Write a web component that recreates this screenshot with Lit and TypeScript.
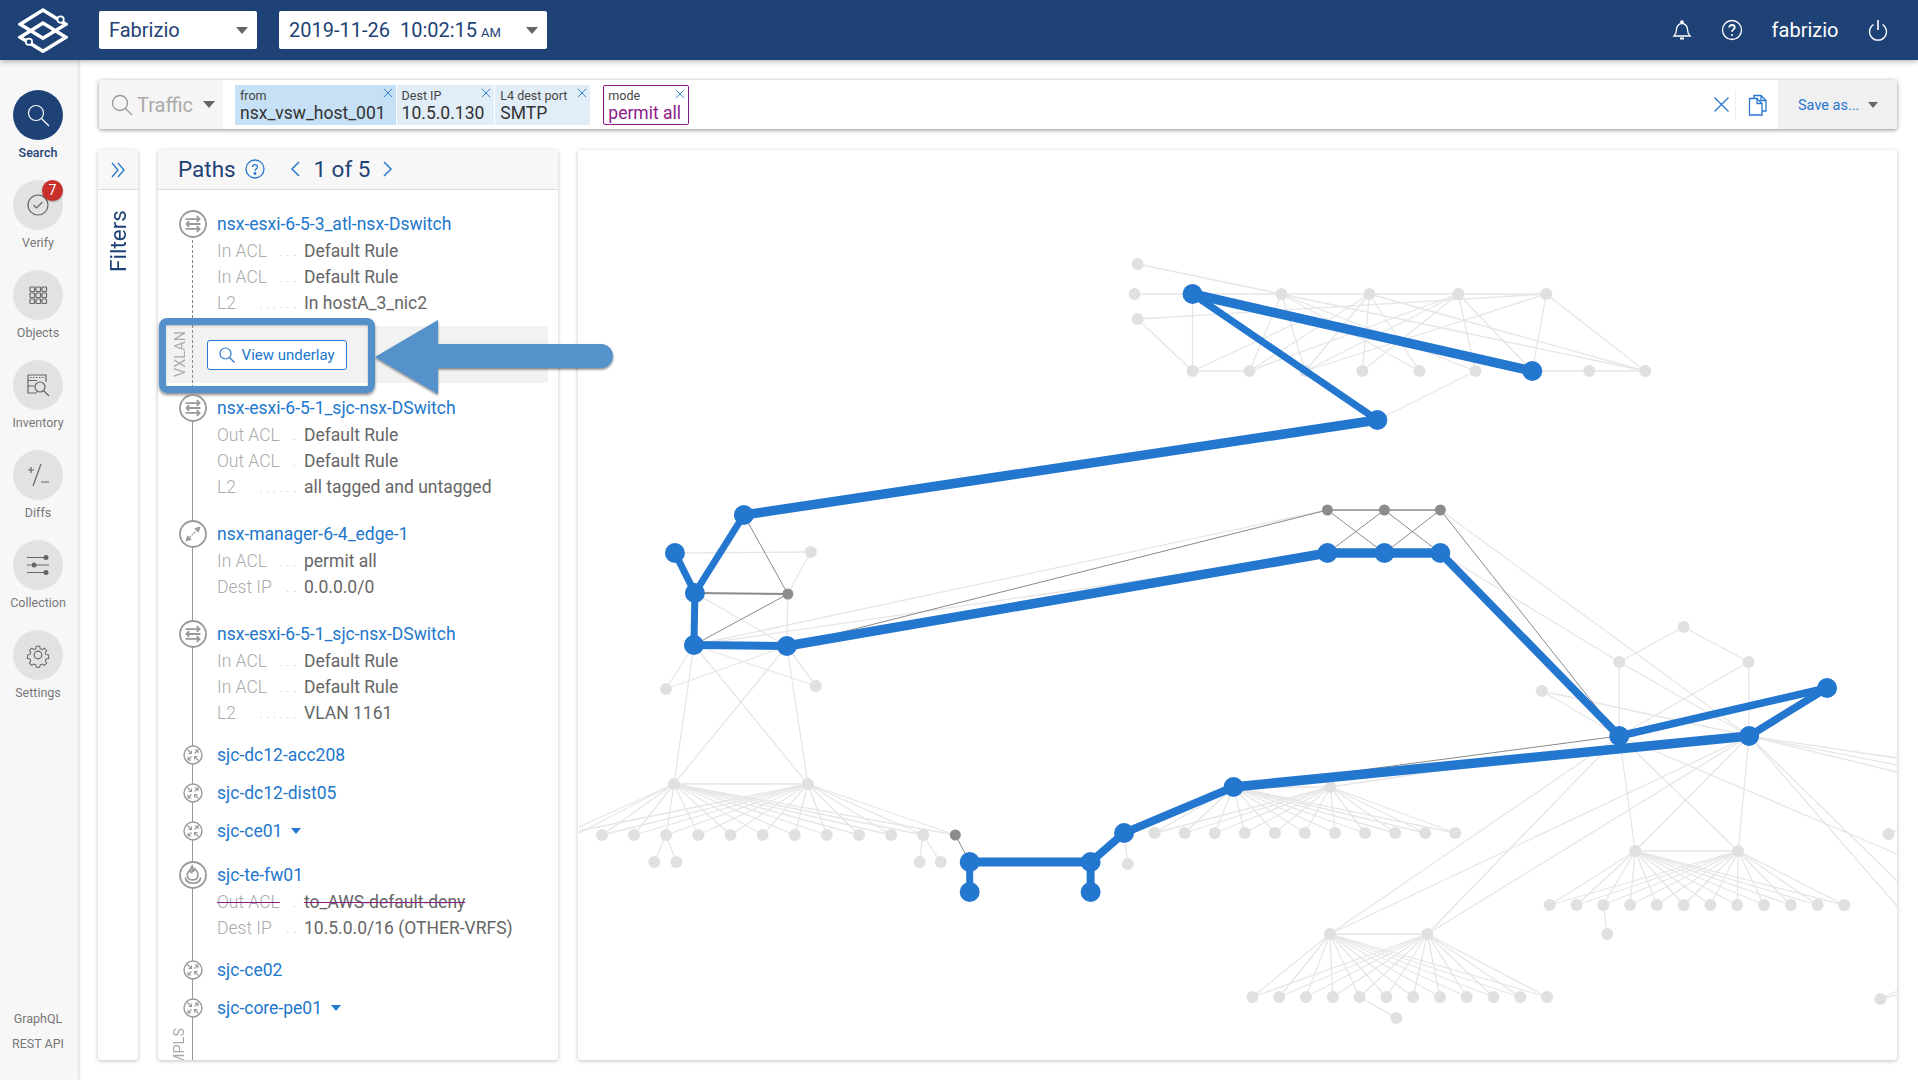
import { LitElement, html, svg, css } from 'lit';
import { customElement } from 'lit/decorators.js';

type Pt = [number, number];

const row = (xs: number[], y: number): Pt[] => xs.map((x) => [x, y] as Pt);
const range = (start: number, step: number, n: number) => Array.from({ length: n }, (_, i) => start + i * step);

const topRow = row([1281, 1369, 1458, 1546], 293);
const botRow = row([1192, 1249, 1305, 1362, 1419, 1475, 1532, 1589, 1645], 370);
const leftParents: Pt[] = [[673, 783], [807, 783]];
const leftFan = row(range(601, 32.15, 11), 834);
const midParents: Pt[] = [[1233, 786], [1330, 786]];
const midFan = row(range(1154, 30.1, 11), 832);
const rightParents: Pt[] = [[1635, 850], [1738, 850]];
const rightFan = row(range(1549.5, 26.8, 12), 904);
const lowParents: Pt[] = [[1329.5, 933], [1427, 933]];
const lowFan = row(range(1252, 26.8, 12), 996);

const L: Pt = [1619, 735];
const M: Pt = [1749, 735];

const fan = (ps: Pt[], cs: Pt[]): [Pt, Pt][] => ps.flatMap((p) => cs.map((c) => [p, c] as [Pt, Pt]));

const lightEdges: [Pt, Pt][] = [
  ...fan(leftParents, leftFan),
  ...fan(leftParents, [[954.6, 834]]),
  ...fan(midParents, midFan),
  ...fan(rightParents, rightFan),
  ...fan(lowParents, lowFan),
  ...fan([L, M], rightParents),
  ...fan([L, M], lowParents),
  ...fan([[693, 644], [786, 645]], leftParents),
  ...fan([[693, 644], [786, 645]], [[665, 688], [815, 685]]),
  ...fan([[1281, 293]], row([1249, 1305, 1419, 1475, 1645], 370)),
  ...fan([[1369, 293]], row([1249, 1305, 1362, 1419, 1645], 370)),
  ...fan([[1458, 293]], row([1249, 1305, 1362, 1475, 1532], 370)),
  ...fan([[1546, 293]], row([1305, 1532, 1645], 370)),
  [[1137, 263], [1281, 293]],
  [[1134, 293], [1546, 293]],
  [[1137, 318], [1546, 293]],
  [[1137, 318], [1192, 370]],
  [[1192, 293], [1192, 370]],
  [[1192, 370], [1305, 318]],
  [[1192, 370], [1249, 370]],
  [[1532, 370], [1645, 370]],
  [[1377, 419], [1475, 370]],
  [[674, 552], [810, 551]],
  [[810, 551], [787, 593]],
  [[787, 593], [786, 645]],
  [[694, 592], [786, 645]],
  [[693, 644], [1327, 509]],
  [[693, 644], [1327, 552]],
  [[1440, 552], [1619, 661]],
  [[1440, 509], M],
  [[1683.5, 626], [1619, 661]],
  [[1683.5, 626], [1748.5, 661]],
  [[1619, 661], L],
  [[1748.5, 661], M],
  [[1748.5, 661], L],
  [[1619, 661], M],
  [[1541.5, 690], L],
  [[1541.5, 690], M],
  [M, [1897, 757]],
  [M, [1897, 764]],
  [M, [1897, 771]],
  [L, [1897, 853]],
  [M, [1897, 905]],
  [M, [1897, 880]],
  [[1605, 745], [1330, 786]],
  [[665, 834], [653.5, 861]],
  [[665, 834], [675.5, 861]],
  [[922, 834], [919, 861]],
  [[922, 834], [940, 861]],
  [[1603, 904], [1607, 933]],
  [[1359, 996], [1396, 1017]],
  [[1124, 832], [1127, 863]],
  [[673, 783], [578, 826]],
  [[673, 783], [578, 832]],
  [[807, 783], [578, 830]],
  [[673, 783], [807, 783]],
  [[1233, 786], [1330, 786]],
  [[1635, 850], [1738, 850]],
  [[1329.5, 933], [1427, 933]],
  [[1888.5, 833], [1897, 829]],
  [[1880.5, 998], [1897, 990]],
  [[1880.5, 998], [1897, 994]],
];

const lightNodes: Pt[] = [
  [1137, 263], [1134, 293], [1137, 318],
  ...topRow, ...botRow,
  [810, 551], [665, 688], [815, 685],
  ...leftParents, ...leftFan,
  [653.5, 861], [675.5, 861], [919, 861], [940, 861],
  ...midParents, ...midFan, [1127, 863],
  ...rightParents, ...rightFan, [1607, 933],
  ...lowParents, ...lowFan, [1396, 1017],
  [1683.5, 626], [1619, 661], [1748.5, 661], [1541.5, 690],
  [1888.5, 833], [1880.5, 998],
];

const darkEdges: [Pt, Pt, number][] = [
  [[743, 514], [787, 593], 1],
  [[694, 592], [787, 593], 2],
  [[693, 644], [787, 593], 1],
  [[786, 645], [1327, 509], 1],
  [[1327, 509], [1440, 509], 1.6],
  [[1327, 509], [1384, 552], 1],
  [[1384, 509], [1327, 552], 1],
  [[1384, 509], [1440, 552], 1],
  [[1440, 509], [1384, 552], 1],
  [[1440, 509], L, 1],
  [L, [1233, 786], 1],
  [[954.6, 834], [969, 861], 1],
];

const darkNodes: Pt[] = [[787, 593], [1327, 509], [1384, 509], [1440, 509], [954.6, 834]];

const blueEdges: [Pt, Pt, number][] = [
  [[1192, 293], [1532, 370], 9.5],
  [[1192, 293], [1377, 419], 7],
  [[1377, 419], [743, 514], 9.5],
  [[743, 514], [694, 592], 7],
  [[674, 552], [694, 592], 7],
  [[694, 592], [693, 644], 7],
  [[693, 644], [786, 645], 8],
  [[786, 645], [1327, 552], 9.5],
  [[1327, 552], [1440, 552], 9.5],
  [[1440, 552], L, 8],
  [L, [1827, 687], 7.5],
  [M, [1827, 687], 7.5],
  [M, [1233, 786], 9.5],
  [[1233, 786], [1123.5, 832], 8],
  [[1123.5, 832], [1090, 861], 8],
  [[1090, 861], [969, 861], 9],
  [[969, 861], [969, 891], 7],
  [[1090, 861], [1090, 891], 8],
];

const blueNodes: Pt[] = [
  [1192, 293], [1532, 370], [1377, 419], [743, 514], [674, 552], [694, 592], [693, 644], [786, 645],
  [1327, 552], [1384, 552], [1440, 552], L, M, [1827, 687], [1233, 786], [1123.5, 832],
  [1090, 861], [969, 861], [969, 891], [1090, 891],
];

const esxiIcon = html`<svg class="ic big" viewBox="0 0 34 34">
  <circle cx="17" cy="17" r="15.8" fill="#fff" stroke="#999" stroke-width="2.200"/>
  <g fill="none" stroke="#999" stroke-width="2.200">
    <path d="M8 11h17M21.500 7.500l3.500 3.500-3.500 3.500"/><path d="M26 17H9M12.500 13.500L9 17l3.500 3.500"/><path d="M8 23h17M21.500 19.500l3.500 3.500-3.500 3.500"/>
  </g>
</svg>`;

const edgeIcon = html`<svg class="ic big" viewBox="0 0 34 34">
  <circle cx="17" cy="17" r="15.8" fill="#fff" stroke="#999" stroke-width="2.200"/>
  <path d="M13 21L21 13" fill="none" stroke="#999" stroke-width="1.800" stroke-dasharray="2 1.500"/>
  <path d="M26 8l-2 7.500L18.500 10zM8 26l2-7.500 5.500 5.500z" fill="#999"/>
</svg>`;

const routerIcon = html`<svg class="ic small" viewBox="0 0 20 20">
  <circle cx="10" cy="10" r="9" fill="#fff" stroke="#999" stroke-width="1.400"/>
  <path d="M4.500 4.500L8.500 8.500M8.500 5.500v3h-3M11.500 8.500L15 5M11.800 5H15v3.200M8.500 11.500L5 15M5 11.800V15h3.200M15.500 15.500L11.500 11.500M11.500 14.500v-3h3" fill="none" stroke="#999" stroke-width="1.100"/>
</svg>`;

const fireIcon = html`<svg class="ic big" viewBox="0 0 34 34">
  <circle cx="17" cy="17" r="15.8" fill="#fff" stroke="#999" stroke-width="2.200"/>
  <path d="M16 6c1 3 1 5 .5 7 1.500-.5 2.500-2 2.500-3.500 3 2.500 4.500 5.500 4 8.500-.4 2.800-3 5-6.500 5s-6-2-6.500-5c-.5-3 1-5 2.500-6.500.5 1 1 1.800 2 2.300C13.500 11.500 14.500 8.500 16 6z" fill="none" stroke="#999" stroke-width="2"/>
  <path d="M7.500 20c1 4.500 5 7 9.500 7s8.500-2.500 9.500-7" fill="none" stroke="#999" stroke-width="2"/>
</svg>`;

type Detail = { label: string; dots: string; value: string; strike?: boolean };

const d = (label: string, dots: string, value: string, strike = false): Detail => ({ label, dots, value, strike });

const closeX = html`<svg class="chip-x" viewBox="0 0 12 12"><path d="M1 1l10 10M11 1L1 11" stroke="#2878d0" stroke-width="1.100" fill="none"/></svg>`;

const caret = html`<span class="caret"></span>`;

@customElement('app-root')
export class AppRoot extends LitElement {
  static styles = css`
    :host {
      display: block;
      min-height: 100vh;
      font-family: Roboto, 'Liberation Sans', sans-serif;
      color: #666;
      background: #fff;
    }

    .page {
      display: flex;
      flex-direction: column;
      height: 1080px;
      overflow: hidden;
    }

    .top {
      height: 60px;
      flex: none;
      display: flex;
      align-items: center;
      background: #1e4276;
      box-shadow: 0 1px 6px rgba(0, 0, 0, 0.35);
      position: relative;
      z-index: 3;
      padding: 0 29.500px 0 18px;
      color: #fff;
    }

    .logo {
      width: 50px;
      height: 45px;
      margin-right: 31px;
    }

    .select {
      height: 38px;
      background: #fff;
      border-radius: 2px;
      display: flex;
      align-items: center;
      color: #1e4276;
      font-size: 20px;
      padding: 0 9px 0 10px;
      box-sizing: border-box;
      justify-content: space-between;
    }

    .select.org {
      width: 158px;
      margin-right: 22px;
    }

    .select.date {
      width: 268px;
    }

    .select small {
      font-size: 13px;
      margin-left: 4px;
    }

    .caret {
      width: 0;
      height: 0;
      border-left: 6px solid transparent;
      border-right: 6px solid transparent;
      border-top: 7px solid #666;
      display: inline-block;
    }

    .top-right {
      margin-left: auto;
      display: flex;
      align-items: center;
      font-size: 20px;
    }

    .top-right svg {
      width: 22px;
      height: 22px;
      fill: none;
      stroke: #fff;
      stroke-width: 1.300;
    }

    .top-right .help {
      margin: 0 29px 0 28px;
    }

    .top-right .user {
      margin-right: 28px;
    }

    .body {
      flex: 1;
      display: flex;
      min-height: 0;
    }

    .side {
      width: 78px;
      flex: none;
      background: #f7f7f7;
      box-shadow: 1px 0 3px rgba(0, 0, 0, 0.18);
      display: flex;
      flex-direction: column;
      align-items: center;
      padding: 30px 2px 24px 0;
      box-sizing: border-box;
      font-size: 12.500px;
      color: #777;
    }

    .nav {
      width: 76px;
      height: 90px;
      display: flex;
      flex-direction: column;
      align-items: center;
      position: relative;
    }

    .nav .circle {
      width: 50px;
      height: 50px;
      border-radius: 50%;
      background: #e2e2e2;
      display: flex;
      align-items: center;
      justify-content: center;
    }

    .nav .circle svg {
      width: 26px;
      height: 26px;
      fill: none;
      stroke: #666;
      stroke-width: 1.200;
    }

    .nav span {
      margin-top: 5px;
      line-height: 16px;
    }

    .nav.on .circle {
      background: #1e4276;
    }

    .nav.on .circle svg {
      stroke: #fff;
    }

    .nav.on span {
      color: #1e4276;
      font-weight: 500;
    }

    .badge {
      position: absolute;
      top: 0;
      left: 42px;
      width: 21px;
      height: 21px;
      border-radius: 50%;
      background: #c9302c;
      color: #fff;
      font-size: 14px;
      line-height: 21px;
      text-align: center;
      box-shadow: 0 1px 2px rgba(0, 0, 0, 0.3);
    }

    .api {
      margin-top: auto;
      line-height: 25px;
      text-align: center;
    }

    .main {
      flex: 1;
      min-width: 0;
      display: flex;
      flex-direction: column;
      padding: 20px 21px 20px 20px;
      gap: 21px;
    }

    .search {
      height: 49px;
      flex: none;
      margin-left: 1px;
      display: flex;
      align-items: stretch;
      background: #fff;
      border-radius: 3px;
      box-shadow: 0 1px 4px rgba(0, 0, 0, 0.45);
    }

    .traffic {
      width: 124px;
      box-sizing: border-box;
      padding-left: 12px;
      background: #f5f5f5;
      display: flex;
      align-items: center;
      color: #aaa;
      font-size: 20px;
      border-radius: 3px 0 0 3px;
    }

    .traffic svg {
      width: 22px;
      height: 22px;
      fill: none;
      stroke: #999;
      stroke-width: 1.300;
      margin-right: 4px;
    }

    .traffic .caret {
      margin-left: 10px;
    }

    .chips {
      display: flex;
      align-items: center;
      padding-left: 12px;
    }

    .chip {
      position: relative;
      height: 40px;
      box-sizing: border-box;
      padding: 4px 10px 0 5px;
      background: #e1edf7;
      color: #333;
      font-size: 17.500px;
      line-height: 20px;
      border-right: 1px solid #fff;
    }

    .chip.sel {
      background: #c6e0f5;
    }

    .chip .v {
      display: block;
      min-width: 80px;
    }

    .chip.sel .v {
      min-width: 143px;
    }

    .chip .k {
      display: block;
      font-size: 12.500px;
      line-height: 14px;
      color: #444;
    }

    .chip.mode {
      margin-left: 12px;
      background: #fff;
      border: 1px solid #8b1a8b;
      border-radius: 2px;
      color: #8b1a8b;
      padding: 3px 7px 0 4px;
    }

    .chip.mode .v {
      min-width: 73px;
    }

    .chip-x {
      position: absolute;
      top: 3px;
      right: 3px;
      width: 10px;
      height: 10px;
    }

    .tools {
      margin-left: auto;
      display: flex;
      align-items: center;
    }

    .tools .x {
      width: 15px;
      height: 15px;
    }

    .tools .sep {
      width: 1px;
      height: 30px;
      background: #eee;
      margin: 0 12px 0 6px;
    }

    .tools .copy {
      width: 20px;
      height: 22px;
      margin-right: 10px;
    }

    .save {
      width: 119px;
      height: 100%;
      box-sizing: border-box;
      background: #f0f0f0;
      color: #2878d0;
      font-size: 14.500px;
      display: flex;
      align-items: center;
      padding: 1px 0 0 20px;
      border-radius: 0 3px 3px 0;
    }

    .save .caret {
      margin-left: 9px;
      border-left-width: 5px;
      border-right-width: 5px;
      border-top-width: 6px;
    }

    .panels {
      flex: 1;
      min-height: 0;
      display: flex;
      gap: 20px;
    }

    .panel {
      background: #fff;
      border-radius: 3px;
      box-shadow: 0 1px 4px rgba(0, 0, 0, 0.25);
      display: flex;
      flex-direction: column;
    }

    .phead {
      height: 40px;
      flex: none;
      box-sizing: border-box;
      background: #f7f7f7;
      border-bottom: 1px solid #ddd;
      border-radius: 3px 3px 0 0;
      display: flex;
      align-items: center;
      color: #1e4276;
    }

    .filters {
      width: 40px;
      flex: none;
    }

    .filters .phead {
      justify-content: center;
    }

    .filters .phead svg {
      width: 16px;
      height: 16px;
    }

    .filters .vert {
      writing-mode: vertical-rl;
      transform: rotate(180deg);
      color: #1e4276;
      font-size: 22.500px;
      margin: 20px auto 0;
    }

    .paths {
      width: 400px;
      flex: none;
      position: relative;
      z-index: 2;
    }

    .paths .phead {
      padding: 0 0 1px 20px;
      font-size: 22.500px;
    }

    .paths .phead .title {
      margin-right: 9.500px;
    }

    .paths .phead svg.q {
      width: 20px;
      height: 20px;
      margin-right: 24.700px;
    }

    .paths .phead svg.nav-ch {
      width: 10px;
      height: 16px;
    }

    .paths .phead .pg {
      font-size: 22.500px;
      margin: 0 12.800px 0 13.500px;
    }

    .list {
      flex: 1;
      min-height: 0;
      overflow: hidden;
      position: relative;
      font-size: 17.500px;
      padding-top: 20px;
    }

    .dash,
    .solid {
      position: absolute;
      left: 34px;
      width: 0;
    }

    .dash {
      top: 50px;
      height: 153px;
      border-left: 1px dashed #888;
    }

    .solid {
      top: 218px;
      bottom: 0;
      border-left: 1px solid #999;
    }

    .node {
      position: relative;
    }

    .node.gap10 {
      margin-top: 10px;
    }

    .node.gap11 {
      margin-top: 11px;
    }

    .node.gap20 {
      margin-top: 20px;
    }

    .head {
      height: 28px;
      display: flex;
      align-items: center;
      color: #2277cc;
      font-size: 17.500px;
    }

    .node.short .head {
      height: 38px;
    }

    .ic-cell {
      width: 59px;
      flex: none;
      display: flex;
      align-items: center;
      position: relative;
      z-index: 1;
    }

    .ic {
      flex: none;
      display: block;
    }

    .ic.big {
      width: 28px;
      height: 28px;
      margin-left: 20.500px;
    }

    .ic.small {
      width: 20px;
      height: 20px;
      margin-left: 24.500px;
    }

    .dn {
      margin-left: 9px;
      border-left-width: 5px;
      border-right-width: 5px;
      border-top: 6px solid #2277cc;
    }

    .det {
      height: 26px;
      line-height: 27px;
      display: flex;
      padding-left: 59px;
      color: #666;
    }

    .lab {
      width: 79px;
      flex: none;
      display: flex;
      justify-content: space-between;
      color: #aaa;
      font-weight: 300;
      margin-right: 8px;
    }

    .lab .dots {
      font-size: 13px;
      letter-spacing: 3.500px;
      margin-right: -3.500px;
      color: #bbb;
    }

    .strike {
      text-decoration: line-through;
      text-decoration-color: #8b1a8b;
    }

    .band {
      margin: 10px 10px 0 9px;
      height: 57px;
      background: #f2f2f2;
      display: flex;
      align-items: center;
    }

    .vlabel {
      writing-mode: vertical-rl;
      transform: rotate(180deg);
      color: #aaa;
      font-size: 14.500px;
    }

    .band .vlabel {
      margin: 0 14.600px 0 5px;
    }

    .under {
      width: 140px;
      height: 30px;
      box-sizing: border-box;
      background: #fff;
      border: 1px solid #2878d0;
      border-radius: 3px;
      color: #2277cc;
      font-family: inherit;
      font-size: 15px;
      display: flex;
      align-items: center;
      padding-left: 11px;
      margin: 1px 0 0 3px;
    }

    .under svg {
      width: 16px;
      height: 16px;
      margin-right: 7px;
      fill: none;
      stroke: #2878d0;
      stroke-width: 1.200;
    }

    .list > .vlabel {
      margin: 1px 0 0 13px;
      width: 17px;
    }

    .hilite {
      position: absolute;
      left: 1px;
      top: 168px;
      width: 216px;
      height: 75px;
      box-sizing: border-box;
      border: 7px solid #5491cb;
      border-radius: 8px;
      box-shadow: 0 2px 3px rgba(0, 0, 0, 0.45), inset 0 1px 2px rgba(0, 0, 0, 0.3);
      pointer-events: none;
    }

    .arrow {
      position: absolute;
      left: 215px;
      top: 166px;
      width: 246px;
      height: 84px;
      overflow: visible;
    }

    .canvas {
      flex: 1;
      min-width: 0;
      overflow: hidden;
    }

    .canvas svg {
      display: block;
      width: 100%;
      height: 100%;
    }
  `;

  private detail(items: Detail[]) {
    return items.map(
      (r) => html`<div class="det">
        <div class="lab"><span class=${r.strike ? 'strike' : ''}>${r.label}</span><span class="dots">${r.dots}</span></div>
        <span class=${r.strike ? 'strike' : ''}>${r.value}</span>
      </div>`
    );
  }

  private node(cls: string, icon: unknown, name: string, items: Detail[] = [], more = false) {
    return html`<div class="node ${cls}">
      <div class="head">
        <div class="ic-cell">${icon}</div>
        <span>${name}</span>
        ${more ? html`<span class="caret dn"></span>` : ''}
      </div>
      ${this.detail(items)}
    </div>`;
  }

  private graph() {
    return html`<svg viewBox="577 149 1320 910" preserveAspectRatio="none">
      <g stroke="#e6e6e6" stroke-width="1.300">
        ${lightEdges.map(([a, b]) => svg`<line x1=${a[0]} y1=${a[1]} x2=${b[0]} y2=${b[1]}></line>`)}
      </g>
      <g fill="#e0e0e0">${lightNodes.map((p) => svg`<circle cx=${p[0]} cy=${p[1]} r="6"></circle>`)}</g>
      <g stroke="#8a8a8a">
        ${darkEdges.map(([a, b, w]) => svg`<line x1=${a[0]} y1=${a[1]} x2=${b[0]} y2=${b[1]} stroke-width=${w}></line>`)}
      </g>
      <g fill="#8c8c8c">${darkNodes.map((p) => svg`<circle cx=${p[0]} cy=${p[1]} r="5.500"></circle>`)}</g>
      <g stroke="#2477cf">
        ${blueEdges.map(([a, b, w]) => svg`<line x1=${a[0]} y1=${a[1]} x2=${b[0]} y2=${b[1]} stroke-width=${w}></line>`)}
      </g>
      <g fill="#2477cf">${blueNodes.map((p) => svg`<circle cx=${p[0]} cy=${p[1]} r="10"></circle>`)}</g>
    </svg>`;
  }

  render() {
    return html`
      <div class="page">
        <header class="top">
          <svg class="logo" viewBox="25 14 140 128" fill="none" stroke="#fff" stroke-width="10">
            <path d="M30 60L95 20l65 40-65 40z"/>
            <path d="M30 97l65-40 65 40-65 40z"/>
            <circle cx="145" cy="47" r="9" fill="#1e4276" stroke-width="5"/>
            <circle cx="55" cy="110" r="9" fill="#1e4276" stroke-width="5"/>
          </svg>
          <div class="select org"><span>Fabrizio</span>${caret}</div>
          <div class="select date"><span>2019-11-26&nbsp; 10:02:15<small>AM</small></span>${caret}</div>
          <div class="top-right">
            <svg viewBox="0 0 22 22">
              <path d="M3 17h16c-1.500-1.500-2.500-2.500-2.500-6.500C16.500 7 14 4.500 11 4.500S5.500 7 5.500 10.500C5.500 14.500 4.500 15.500 3 17z"/>
              <circle cx="11" cy="3" r="1.200" fill="#fff"/>
              <path d="M9 19.500h4" stroke-width="2"/>
            </svg>
            <svg class="help" viewBox="0 0 22 22">
              <circle cx="11" cy="11" r="9.500"/>
              <path d="M8.300 8.500c0-1.600 1.200-2.500 2.700-2.500s2.700.9 2.700 2.400c0 2.200-2.700 2.300-2.700 4.300" stroke-width="1.800"/>
              <circle cx="11" cy="16" r="1" fill="#fff" stroke="none"/>
            </svg>
            <span class="user">fabrizio</span>
            <svg viewBox="0 0 22 22">
              <path d="M6.500 5.500a8.500 8.500 0 1 0 9 0"/>
              <path d="M11 1v10" stroke-width="1.600"/>
            </svg>
          </div>
        </header>
        <div class="body">
          <nav class="side">
            <div class="nav on">
              <div class="circle"><svg viewBox="0 0 26 26"><circle cx="11" cy="11" r="7.500"/><path d="M16.500 16.500L24 24"/></svg></div>
              <span>Search</span>
            </div>
            <div class="nav">
              <div class="circle"><svg viewBox="0 0 26 26"><circle cx="13" cy="13" r="10"/><path d="M8.500 13l3 3 6-6"/></svg></div>
              <div class="badge">7</div>
              <span>Verify</span>
            </div>
            <div class="nav">
              <div class="circle"><svg viewBox="0 0 26 26">
                ${[5, 11, 17].flatMap((y) =>
                  [5, 11, 17].map((x) => svg`<rect x=${x} y=${y} width="4.500" height="4.500" rx="0.800"></rect>`)
                )}
              </svg></div>
              <span>Objects</span>
            </div>
            <div class="nav">
              <div class="circle"><svg viewBox="0 0 26 26">
                <path d="M3 3h18v7M3 3v18h9M3 8.500h9M3 14h6"/>
                <path d="M5 5.500h14" stroke-dasharray="1.500 1.500"/>
                <circle cx="15" cy="15" r="5"/>
                <path d="M18.500 18.500L24 24"/>
              </svg></div>
              <span>Inventory</span>
            </div>
            <div class="nav">
              <div class="circle"><svg viewBox="0 0 26 26">
                <path d="M3 8h6M6 5v6M16 2L8 24M16 20h8"/>
              </svg></div>
              <span>Diffs</span>
            </div>
            <div class="nav">
              <div class="circle"><svg viewBox="0 0 26 26">
                <path d="M2 5.500h18M2 13h4M10 13h14M2 20.500h18"/>
                <g fill="#666" stroke="none"><circle cx="21" cy="5.500" r="2.500"/><circle cx="9" cy="13" r="2.500"/><circle cx="21" cy="20.500" r="2.500"/></g>
              </svg></div>
              <span>Collection</span>
            </div>
            <div class="nav">
              <div class="circle"><svg viewBox="0 0 26 26">
                <circle cx="13" cy="13" r="3.800"/>
                <path d="M11 2.500h4l.6 3 2.300 1 2.600-1.700 2.800 2.800-1.700 2.600 1 2.300 3 .6v4l-3 .6-1 2.300 1.700 2.600-2.800 2.800-2.600-1.700-2.300 1-.6 3h-4l-.6-3-2.300-1-2.600 1.700-2.800-2.800 1.700-2.600-1-2.300-3-.6v-4l3-.6 1-2.300-1.700-2.600 2.800-2.800 2.600 1.700 2.300-1z" transform="translate(2.100 2.100) scale(.84)"/>
              </svg></div>
              <span>Settings</span>
            </div>
            <div class="api">GraphQL<br />REST API</div>
          </nav>
          <main class="main">
            <div class="search">
              <div class="traffic">
                <svg viewBox="0 0 22 22"><circle cx="9" cy="9" r="7.500"/><path d="M14.500 14.500L21 21"/></svg>
                <span>Traffic</span>${caret}
              </div>
              <div class="chips">
                <div class="chip sel"><span class="k">from</span><span class="v">nsx_vsw_host_001</span>${closeX}</div>
                <div class="chip"><span class="k">Dest IP</span><span class="v">10.5.0.130</span>${closeX}</div>
                <div class="chip"><span class="k">L4 dest port</span><span class="v">SMTP</span>${closeX}</div>
                <div class="chip mode"><span class="k">mode</span><span class="v">permit all</span>${closeX}</div>
              </div>
              <div class="tools">
                <svg class="x" viewBox="0 0 15 15"><path d="M.5.500l14 14M14.500.500l-14 14" stroke="#2878d0" stroke-width="1.300"/></svg>
                <span class="sep"></span>
                <svg class="copy" viewBox="0 0 20 22" fill="none" stroke="#2878d0" stroke-width="1.300">
                  <path d="M6 4V1.500h7l5 5V17h-4"/>
                  <path d="M13 1.500v5h5"/>
                  <path d="M1.500 4.500H9l5 5V21H1.500z" fill="#fff"/>
                  <path d="M9 4.500v5h5"/>
                </svg>
                <div class="save"><span>Save as...</span>${caret}</div>
              </div>
            </div>
            <div class="panels">
              <section class="panel filters">
                <div class="phead">
                  <svg viewBox="0 0 16 16" fill="none" stroke="#2878d0" stroke-width="1.300"><path d="M2 1l6 7-6 7M8 1l6 7-6 7"/></svg>
                </div>
                <div class="vert">Filters</div>
              </section>
              <section class="panel paths">
                <div class="phead">
                  <span class="title">Paths</span>
                  <svg class="q" viewBox="0 0 20 20" fill="none" stroke="#2878d0" stroke-width="1.300">
                    <circle cx="10" cy="10" r="9"/>
                    <path d="M7.500 8c0-1.500 1.100-2.400 2.500-2.400s2.500.9 2.500 2.300c0 2-2.500 2.100-2.500 4"/>
                    <circle cx="10" cy="14.500" r=".8" fill="#2878d0"/>
                  </svg>
                  <svg class="nav-ch" viewBox="0 0 10 16" fill="none" stroke="#2878d0" stroke-width="1.500"><path d="M9 1L2 8l7 7"/></svg>
                  <span class="pg">1 of 5</span>
                  <svg class="nav-ch" viewBox="0 0 10 16" fill="none" stroke="#2878d0" stroke-width="1.500"><path d="M1 1l7 7-7 7"/></svg>
                </div>
                <div class="list">
                  <span class="dash"></span>
                  <span class="solid"></span>
                  ${this.node('', esxiIcon, 'nsx-esxi-6-5-3_atl-nsx-Dswitch', [
                    d('In ACL', '...', 'Default Rule'),
                    d('In ACL', '...', 'Default Rule'),
                    d('L2', '......', 'In hostA_3_nic2'),
                  ])}
                  <div class="band">
                    <span class="vlabel">VXLAN</span>
                    <button class="under">
                      <svg viewBox="0 0 16 16"><circle cx="6.500" cy="6.500" r="5.500"/><path d="M10.500 10.500L15.500 15.500"/></svg>
                      View underlay
                    </button>
                  </div>
                  ${this.node('gap11', esxiIcon, 'nsx-esxi-6-5-1_sjc-nsx-DSwitch', [
                    d('Out ACL', '.', 'Default Rule'),
                    d('Out ACL', '.', 'Default Rule'),
                    d('L2', '......', 'all tagged and untagged'),
                  ])}
                  ${this.node('gap20', edgeIcon, 'nsx-manager-6-4_edge-1', [
                    d('In ACL', '...', 'permit all'),
                    d('Dest IP', '..', '0.0.0.0/0'),
                  ])}
                  ${this.node('gap20', esxiIcon, 'nsx-esxi-6-5-1_sjc-nsx-DSwitch', [
                    d('In ACL', '...', 'Default Rule'),
                    d('In ACL', '...', 'Default Rule'),
                    d('L2', '......', 'VLAN 1161'),
                  ])}
                  ${this.node('short gap10', routerIcon, 'sjc-dc12-acc208')}
                  ${this.node('short', routerIcon, 'sjc-dc12-dist05')}
                  ${this.node('short', routerIcon, 'sjc-ce01', [], true)}
                  ${this.node('gap11', fireIcon, 'sjc-te-fw01', [
                    d('Out ACL', '.', 'to_AWS-default-deny', true),
                    d('Dest IP', '..', '10.5.0.0/16 (OTHER-VRFS)'),
                  ])}
                  ${this.node('short gap10', routerIcon, 'sjc-ce02')}
                  ${this.node('short', routerIcon, 'sjc-core-pe01', [], true)}
                  <div class="vlabel">MPLS</div>
                </div>
                <div class="hilite"></div>
                <svg class="arrow" viewBox="0 0 246 84">
                  <defs>
                    <filter id="sh" x="-5%" y="-10%" width="110%" height="125%">
                      <feDropShadow dx="0" dy="1.500" stdDeviation="1.200" flood-color="#000" flood-opacity="0.5"></feDropShadow>
                    </filter>
                  </defs>
                  <path d="M2 41L65 4V28H228a12 12 0 0 1 0 24H65V78z" fill="#5491cb" filter="url(#sh)"></path>
                </svg>
              </section>
              <section class="panel canvas">${this.graph()}</section>
            </div>
          </main>
        </div>
      </div>
    `;
  }
}

declare global {
  interface HTMLElementTagNameMap {
    'app-root': AppRoot;
  }
}
